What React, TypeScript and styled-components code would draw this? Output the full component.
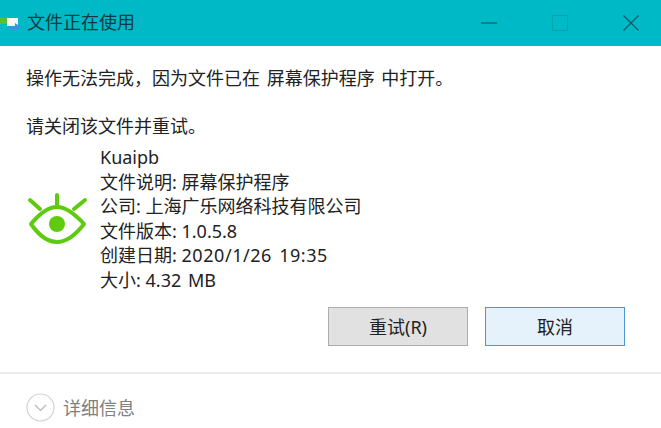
import styled, { createGlobalStyle } from "styled-components";

const GlobalStyle = createGlobalStyle`
  html, body {
    margin: 0;
    padding: 0;
    background: #fff;
  }
  body {
    font-family: "Noto Sans", "Noto Sans CJK SC", sans-serif;
  }
`;

const Dialog = styled.div`
  width: 661px;
  height: 428px;
  display: flex;
  flex-direction: column;
  overflow: hidden;
  background: #fff;
`;

const TitleBar = styled.div`
  height: 46px;
  flex: none;
  background: #00b9c6;
  display: flex;
  align-items: center;
  gap: 11px;
`;

const AppIcon = styled.svg`
  width: 21px;
  height: 16px;
  flex: none;
  margin-right: -5px;
`;

const Title = styled.div`
  flex: 1;
  font-size: 18px;
  line-height: 46px;
  margin-top: -2px;
  color: #0a3a44;
`;

const WindowButton = styled.div`
  width: 60px;
  height: 46px;
  display: flex;
  align-items: center;
  justify-content: center;
`;

const Content = styled.div`
  flex: 1;
  padding: 20px 36px 0 26px;
  display: flex;
  flex-direction: column;
`;

const Message = styled.div<{ $spaced?: boolean }>`
  font-size: 18px;
  line-height: 24px;
  color: #222;
  word-spacing: 2px;
  margin-top: ${(p) => (p.$spaced ? "24px" : "0")};
`;

const FileInfo = styled.div`
  display: flex;
  align-items: center;
  margin-top: 7px;
`;

const FileIcon = styled.svg`
  width: 62px;
  height: 52px;
  flex: none;
  margin: 0 12px 0 0;
`;

const InfoLines = styled.div`
  font-size: 18px;
  line-height: 24.5px;
  color: #222;
`;

const InfoValue = styled.span<{ $wide?: boolean }>`
  word-spacing: 2px;
  letter-spacing: ${(p) => (p.$wide ? "0.55px" : "0")};
`;

const Actions = styled.div`
  display: flex;
  justify-content: flex-end;
  gap: 17px;
  margin-top: 15px;
`;

const ActionButton = styled.button<{ $primary?: boolean }>`
  width: 140px;
  height: 39px;
  box-sizing: border-box;
  font-family: inherit;
  font-size: 18px;
  color: #222;
  padding: 0 0 2px;
  background: ${(p) => (p.$primary ? "#e5f1fb" : "#e1e1e1")};
  border: 1px solid ${(p) => (p.$primary ? "#4a97d3" : "#adadad")};
`;

const Footer = styled.div`
  height: 56px;
  flex: none;
  border-top: 2px solid #ececec;
  display: flex;
  align-items: center;
  padding: 12px 0 0 26px;
  box-sizing: border-box;
  gap: 8px;
`;

const DetailsLabel = styled.span`
  font-size: 18px;
  color: #808080;
`;

const App = () => {
    return (
        <Dialog>
            <GlobalStyle/>
            <TitleBar>
                <AppIcon viewBox="0 0 21 16">
                    <rect x="0" y="3" width="7" height="6" fill="#52c234"/>
                    <rect x="7" y="3" width="11" height="8" fill="#f4f6f8"/>
                    <path d="M10 11h5V8l6 4-6 4v-2h-5z" fill="#3f8fe8"/>
                </AppIcon>
                <Title>文件正在使用</Title>
                <WindowButton>
                    <svg width="16" height="16" viewBox="0 0 16 16">
                        <path d="M0 8h16" stroke="#0f5a64" strokeWidth="1.2"/>
                    </svg>
                </WindowButton>
                <WindowButton>
                    <svg width="16" height="16" viewBox="0 0 16 16">
                        <rect x="0.5" y="0.5" width="15" height="15" fill="none" stroke="#0aa3b0"/>
                    </svg>
                </WindowButton>
                <WindowButton>
                    <svg width="16" height="16" viewBox="0 0 16 16">
                        <path d="M0.5 0.5l15 15M15.5 0.5l-15 15" stroke="#0f5a64" strokeWidth="1.2"/>
                    </svg>
                </WindowButton>
            </TitleBar>
            <Content>
                <Message>操作无法完成，因为文件已在 屏幕保护程序 中打开。</Message>
                <Message $spaced>请关闭该文件并重试。</Message>
                <FileInfo>
                    <FileIcon viewBox="0 0 62 52">
                        <g fill="none" stroke="#5fcb10" strokeWidth="4" strokeLinecap="round" strokeLinejoin="round">
                            <path d="M4 7l10 9M31 2v12M59 7l-11 9"/>
                            <path d="M5 31C14 20 22 14 31 14s17 6 27 17C48 44 40 49 31 49S14 44 5 31z"/>
                        </g>
                        <circle cx="31" cy="31" r="8" fill="#5fcb10"/>
                    </FileIcon>
                    <InfoLines>
                        <div>Kuaipb</div>
                        <div>文件说明: 屏幕保护程序</div>
                        <div>公司: 上海广乐网络科技有限公司</div>
                        <div>文件版本: 1.0.5.8</div>
                        <div>创建日期: <InfoValue $wide>2020/1/26 19:35</InfoValue></div>
                        <div>大小: <InfoValue>4.32 MB</InfoValue></div>
                    </InfoLines>
                </FileInfo>
                <Actions>
                    <ActionButton>重试(R)</ActionButton>
                    <ActionButton $primary>取消</ActionButton>
                </Actions>
            </Content>
            <Footer>
                <svg width="29" height="29" viewBox="0 0 29 29">
                    <circle cx="14.5" cy="14.5" r="13.5" fill="none" stroke="#d4d4d4" strokeWidth="1.2"/>
                    <path d="M9 12l5.5 5.5L20 12" fill="none" stroke="#b5b5b5" strokeWidth="1.2"/>
                </svg>
                <DetailsLabel>详细信息</DetailsLabel>
            </Footer>
        </Dialog>
    );
};

export default App;
